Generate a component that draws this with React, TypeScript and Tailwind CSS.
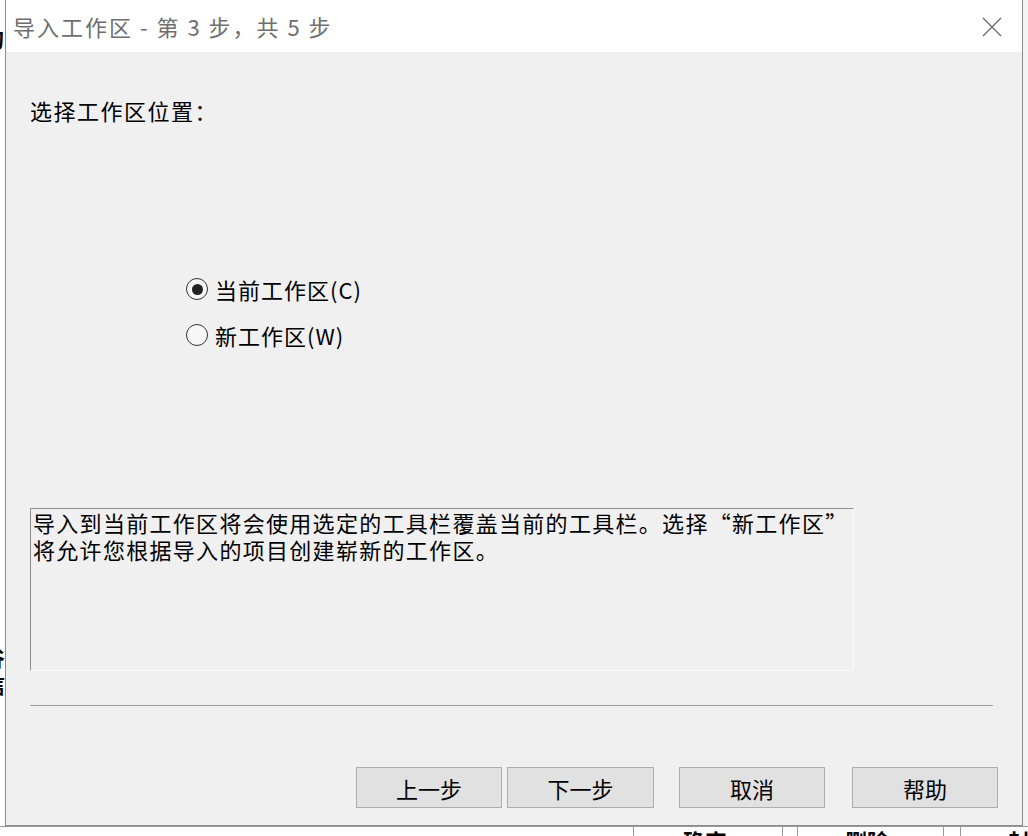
import React from "react";

const FONT = "font-['Microsoft_YaHei','Noto_Sans_CJK_SC',sans-serif]";

function Radio({ checked, label }: { checked: boolean; label: string }) {
  return (
    <div className="flex h-[30px] items-center">
      <span className="flex h-[22px] w-[22px] items-center justify-center rounded-full border-[1.5px] border-[#333333] bg-[#f7f7f7]">
        {checked && <span className="h-[11px] w-[11px] rounded-full bg-[#222222]" />}
      </span>
      <span className="ml-[7px] text-[22px] leading-[30px] tracking-[1px] text-black">{label}</span>
    </div>
  );
}

function Btn({ label, className = "" }: { label: string; className?: string }) {
  return (
    <button
      className={`flex h-[41px] w-[146px] items-center justify-center border border-[#adadad] bg-[#e1e1e1] text-[22px] leading-none text-black ${className}`}
    >
      {label}
    </button>
  );
}

export default function App() {
  return (
    <div className={`relative h-[836px] w-[1028px] overflow-hidden bg-[#f0f0f0] ${FONT}`}>
      <div className="flex h-[826px]">
        {/* left background strip */}
        <div className="relative w-[5px] overflow-hidden bg-white">
          <span className="absolute left-[-18px] top-[26px] text-[22px] font-bold leading-none text-black">的</span>
          <span className="absolute left-[-17px] top-[645px] text-[22px] font-bold leading-none text-black">谷</span>
          <span className="absolute left-[-17px] top-[672px] text-[22px] font-bold leading-none text-black">信</span>
        </div>
        {/* dialog */}
        <div className="flex flex-1 flex-col border-x border-b border-[#8c8c8c]">
          <div className="flex h-[52px] items-center justify-between bg-white pl-[7px] pr-[20px]">
            <span className="text-[22px] leading-none tracking-[2px] text-[#6e6e6e]">导入工作区 - 第 3 步，共 5 步</span>
            <svg width="20" height="20" viewBox="0 0 20 20" className="mt-[1px]">
              <path d="M1 1 L19 19 M19 1 L1 19" stroke="#6a6a6a" strokeWidth="1.3" fill="none" />
            </svg>
          </div>
          <div className="flex flex-1 flex-col bg-[#f0f0f1] pl-[24px] pr-[24px]">
            <div className="mt-[43px] h-[30px] text-[22px] leading-[30px] tracking-[1.5px] text-black">选择工作区位置：</div>
            <div className="ml-[156px] mt-[149px] flex flex-col gap-[16px]">
              <Radio checked label="当前工作区(C)" />
              <Radio checked={false} label="新工作区(W)" />
            </div>
            <div className="mt-[158px] h-[163px] w-[824px] border border-t-[#8f8f8f] border-l-[#8f8f8f] border-b-[#fafafa] border-r-[#fafafa] pl-[2px]">
              <p className="text-[22px] leading-[27px] tracking-[1.3px] text-black">
                导入到当前工作区将会使用选定的工具栏覆盖当前的工具栏。选择“新工作区”
                <br />
                将允许您根据导入的项目创建崭新的工作区。
              </p>
            </div>
            <div className="mt-[34px] h-px w-[963px] bg-[#a0a0a0]" />
            <div className="mt-[61px] flex justify-end">
              <Btn label="上一步" />
              <Btn label="下一步" className="ml-[5px] w-[147px]" />
              <Btn label="取消" className="ml-[25px]" />
              <Btn label="帮助" className="ml-[27px]" />
            </div>
          </div>
        </div>
        {/* right background strip */}
        <div className="w-[5px] bg-[#f3f3f3]" />
      </div>
      {/* bottom background strip */}
      <div className="relative h-[10px] overflow-hidden border-t border-[#9a9a9a] bg-white">
        <div className="absolute left-[633px] top-0 h-full w-px bg-[#9a9a9a]" />
        <div className="absolute left-[782px] top-0 h-full w-px bg-[#9a9a9a]" />
        <div className="absolute left-[797px] top-0 h-full w-px bg-[#9a9a9a]" />
        <div className="absolute left-[943px] top-0 h-full w-px bg-[#9a9a9a]" />
        <div className="absolute left-[960px] top-0 h-full w-px bg-[#9a9a9a]" />
        <span className="absolute left-[683px] top-[2px] text-[22px] font-bold leading-none text-black">确定</span>
        <span className="absolute left-[845px] top-[2px] text-[22px] font-bold leading-none text-black">删除</span>
        <span className="absolute left-[1008px] top-[2px] text-[22px] font-bold leading-none text-black">封</span>
      </div>
    </div>
  );
}
